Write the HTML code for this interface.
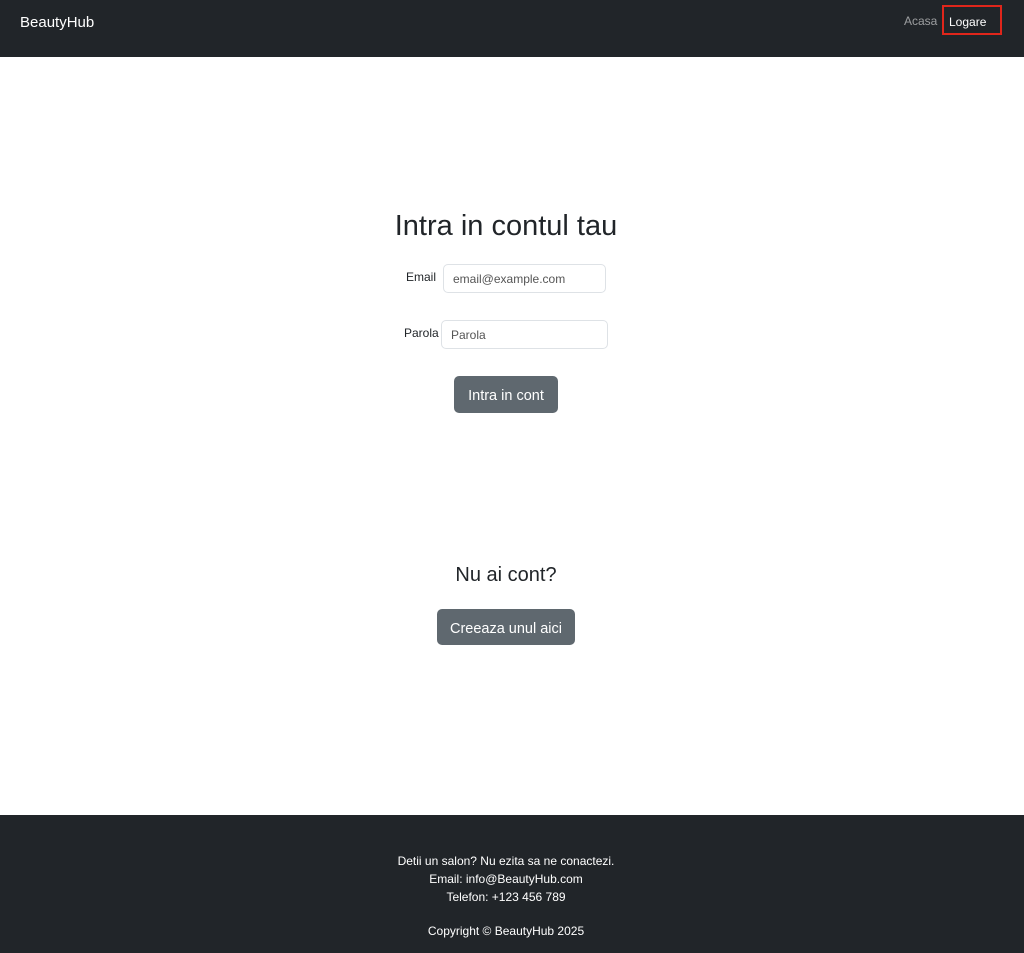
<!DOCTYPE html>
<html><head><meta charset="utf-8"><style>
*{box-sizing:border-box;margin:0;padding:0}
body{width:1024px;height:953px;font-family:"Liberation Sans",sans-serif;background:#fff;color:#212529;position:relative;overflow:hidden}
.nav{position:absolute;top:0;left:0;width:1024px;height:57px;background:#212529}
.brand{position:absolute;left:20px;top:14px;color:#fff;font-size:15px}
.acasa{position:absolute;left:904px;top:14px;color:rgba(255,255,255,.55);font-size:12px}
.log{position:absolute;left:942px;top:5px;width:60px;height:30px;border:2px solid #e0261b;color:#fff;font-size:12px;padding:8px 0 0 5px}
.abs{position:absolute}
h1{position:absolute;top:210px;left:0;width:1012px;text-align:center;font-size:29px;font-weight:normal}
.lbl{font-size:12px}
.inp{border:1px solid #dee2e6;border-radius:5px;height:29px;font-size:12px;color:#555;padding:7px 9px;background:#fff}
.btn{color:#fff;border-radius:5px;font-size:14.5px;text-align:center;background:#5f686f}
.foot{position:absolute;top:815px;left:0;width:1024px;height:138px;background:#212529;color:#fff;font-size:12px;text-align:center}
</style></head><body>
<div class="nav"><div class="brand">BeautyHub</div><div class="acasa">Acasa</div><div class="log">Logare</div></div>
<h1>Intra in contul tau</h1>
<div class="abs lbl" style="left:406px;top:270px">Email</div>
<div class="abs inp" style="left:443px;top:264px;width:163px">email@example.com</div>
<div class="abs lbl" style="left:404px;top:326px">Parola</div>
<div class="abs inp" style="left:441px;top:320px;width:167px">Parola</div>
<div class="abs btn" style="left:454px;top:376px;width:104px;height:37px;line-height:41px">Intra in cont</div>
<div class="abs" style="left:0;width:1012px;top:564px;text-align:center;font-size:20px">Nu ai cont?</div>
<div class="abs btn" style="left:437px;top:609px;width:138px;height:36px;line-height:40px">Creeaza unul aici</div>
<div class="foot">
<div style="position:absolute;top:37px;width:1012px;line-height:18px">Detii un salon? Nu ezita sa ne conactezi.<br>Email: info@BeautyHub.com<br>Telefon: +123 456 789</div>
<div style="position:absolute;top:109px;width:1012px">Copyright © BeautyHub 2025</div>
</div>
</body></html>
